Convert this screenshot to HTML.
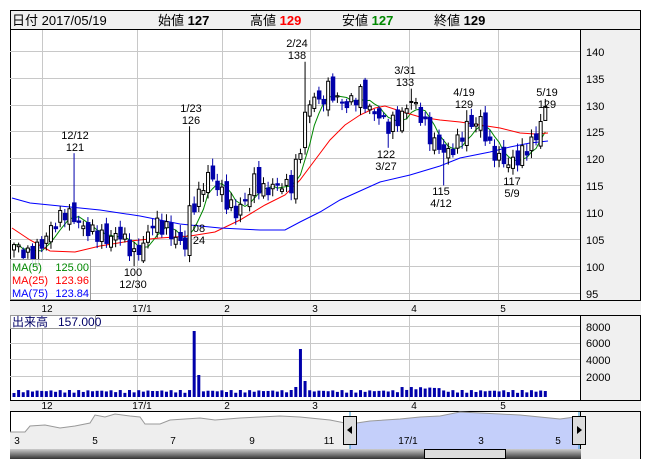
<!DOCTYPE html><html><head><meta charset="utf-8"><style>
body{margin:0;background:#fff;width:652px;height:469px;overflow:hidden;font-family:"Liberation Sans","Noto Sans CJK JP",sans-serif}
svg{position:absolute;left:0;top:0}
</style></head><body>
<svg id="s" width="652" height="469" xmlns="http://www.w3.org/2000/svg" font-family="Liberation Sans, Noto Sans CJK JP, sans-serif">
<rect x="10.5" y="10.5" width="630" height="448" fill="#fff" stroke="#000"/>
<rect x="11" y="11" width="629" height="18" fill="#f0f0f0"/>
<line x1="10" y1="29.5" x2="641" y2="29.5" stroke="#000"/>
<g font-size="13" fill="#000">
<text x="12" y="25">日付 2017/05/19</text>
<text x="158" y="25">始値 <tspan font-weight="bold">127</tspan></text>
<text x="250" y="25">高値 <tspan font-weight="bold" fill="#f00">129</tspan></text>
<text x="342" y="25">安値 <tspan font-weight="bold" fill="#080">127</tspan></text>
<text x="434" y="25">終値 <tspan font-weight="bold">129</tspan></text>
</g>
<rect x="581" y="30" width="59" height="270" fill="#f0f0f0"/>
<line x1="580.5" y1="30" x2="580.5" y2="459" stroke="#000"/>
<g id="grid" stroke="#c8c8c8"></g>
<rect x="10" y="300" width="631" height="15" fill="#f0f0f0"/>
<line x1="10" y1="300.5" x2="641" y2="300.5" stroke="#000"/>
<line x1="10" y1="315.5" x2="641" y2="315.5" stroke="#000"/>
<rect x="581" y="316" width="59" height="84" fill="#f0f0f0"/>
<rect x="10" y="400" width="631" height="11" fill="#f0f0f0"/>
<line x1="10" y1="400.5" x2="641" y2="400.5" stroke="#000"/>
<line x1="10" y1="411.5" x2="641" y2="411.5" stroke="#000"/>
<rect x="581" y="412" width="59" height="47" fill="#f0f0f0"/>
<g font-size="11" fill="#000">
<text x="586" y="56">140</text><text x="586" y="83">135</text><text x="586" y="110">130</text><text x="586" y="136">125</text><text x="586" y="163">120</text><text x="586" y="190">115</text><text x="586" y="217">110</text><text x="586" y="244">105</text><text x="586" y="271">100</text><text x="586" y="298">95</text>
<text x="586" y="331">8000</text><text x="586" y="347">6000</text><text x="586" y="364">4000</text><text x="586" y="381">2000</text>
<g id="axlab"></g>
</g>
<g id="ov"></g>
<g id="ma"></g>
<g id="cand"></g>
<g id="vol"></g>
<g font-size="11" fill="#000" text-anchor="middle">
<text x="75" y="139">12/12</text><text x="75" y="151">121</text>
<text x="191" y="112">1/23</text><text x="191" y="124">126</text>
<text x="297" y="47">2/24</text><text x="297" y="59">138</text>
<text x="405" y="74">3/31</text><text x="405" y="86">133</text>
<text x="464" y="96">4/19</text><text x="464" y="108">129</text>
<text x="547" y="96">5/19</text><text x="547" y="108">129</text>
<text x="386" y="158">122</text><text x="386" y="170">3/27</text>
<text x="441" y="195">115</text><text x="441" y="207">4/12</text>
<text x="512" y="185">117</text><text x="512" y="197">5/9</text>
<text x="133" y="276">100</text><text x="133" y="288">12/30</text>
<text x="199" y="232">08</text><text x="199" y="244">24</text>
</g>
<rect x="10.5" y="259.5" width="80" height="40" fill="#fff" fill-opacity="0.85" stroke="#999"/>
<g font-size="11">
<text x="12" y="271" fill="#080">MA(5)</text><text x="89" y="271" fill="#080" text-anchor="end">125.00</text>
<text x="12" y="284" fill="#f00">MA(25)</text><text x="89" y="284" fill="#f00" text-anchor="end">123.96</text>
<text x="12" y="297" fill="#00f">MA(75)</text><text x="89" y="297" fill="#00f" text-anchor="end">123.84</text>
</g>
<rect x="10.5" y="315.5" width="85" height="13" fill="#fff" stroke="#999"/>
<text x="12" y="326" font-size="12" fill="#006">出来高 <tspan x="58">157.000</tspan></text>
<defs><linearGradient id="sb" x1="0" y1="0" x2="0" y2="1"><stop offset="0" stop-color="#ccc"/><stop offset="1" stop-color="#333"/></linearGradient></defs>
<rect x="10" y="449" width="571" height="10" fill="url(#sb)"/>
<rect x="424.5" y="449.5" width="81" height="9" fill="#ddd" stroke="#000"/>
<rect x="343.5" y="416.5" width="13" height="28" fill="#ddd" stroke="#000"/>
<polygon points="347,430 352,426 352,434" fill="#000"/>
<rect x="572.5" y="416.5" width="13" height="28" fill="#ddd" stroke="#000"/>
<polygon points="582,430 577,426 577,434" fill="#000"/>
</svg>
<script>
const NS="http://www.w3.org/2000/svg";
function el(p,t,a){const e=document.createElementNS(NS,t);for(const k in a)e.setAttribute(k,a[k]);document.getElementById(p).appendChild(e);return e;}
const Y=v=>51+(140-v)*5.378;
[51,78,105,131,158,185,212,239,266,293].forEach(y=>el('grid','line',{x1:10,x2:580,y1:y+.5,y2:y+.5}));
[326,343,359,376].forEach(y=>el('grid','line',{x1:10,x2:580,y1:y+.5,y2:y+.5}));
const vx=[42,137,222,310,409,498];
vx.forEach(x=>{el('grid','line',{x1:x+.5,x2:x+.5,y1:30,y2:300});el('grid','line',{x1:x+.5,x2:x+.5,y1:316,y2:400});});
const lab=['12','17/1','2','3','4','5'];
vx.forEach((x,i)=>{[312,409].forEach(y=>{const t=el('axlab','text',{x:x+5,y:y,'text-anchor':'middle','font-size':'10'});t.textContent=lab[i];});});
let op="M10,449 L10,432 ",ol="";
const ovp=[[10,432],[25,432],[30,426],[45,425],[60,428],[75,426],[90,423],[95,415],[105,417],[115,414],[130,416],[140,417],[145,424],[160,424],[170,420],[200,418],[215,420],[240,418],[260,417],[280,416],[300,417],[330,420],[350,424],[370,421],[400,419],[420,417],[440,416],[460,412],[480,413],[500,414],[520,415],[540,417],[560,419],[575,417],[580,417]];
ovp.forEach(p=>{op+="L"+p[0]+","+p[1]+" ";ol+=p[0]+","+p[1]+" ";});
op+="L580,449 Z";
el('ov','path',{d:op,fill:'#eee'});
const cp=el('ov','clipPath',{id:'c'});const cr=document.createElementNS(NS,'rect');
cr.setAttribute('x',350);cr.setAttribute('y',410);cr.setAttribute('width',230);cr.setAttribute('height',40);cp.appendChild(cr);
el('ov','path',{d:op,fill:'#c4cffa','clip-path':'url(#c)'});
el('ov','polyline',{points:ol,fill:'none',stroke:'#999'});
el('ov','line',{x1:350,x2:350,y1:412,y2:449,stroke:'#39c'});el('ov','line',{x1:579,x2:579,y1:412,y2:449,stroke:'#39c'});
[[17,'3'],[95,'5'],[173,'7'],[252,'9'],[329,'11'],[408,'17/1'],[481,'3'],[558,'5']].forEach(a=>{const t=el('ov','text',{x:a[0],y:444,'font-size':'10','text-anchor':'middle'});t.textContent=a[1];});
const kp=[[0,104],[3,102],[6,104],[8,107],[11,110],[13,109],[15,107],[18,106],[20,105],[23,106],[26,102],[28,104],[30,108],[33,107],[35,105],[37,104],[38,110],[40,113],[42,117],[44,115],[46,112],[48,110],[50,112],[52,116],[54,114],[57,115],[60,115],[62,122],[63,128],[65,132],[66,130],[68,133],[70,131],[72,130],[75,132],[77,129],[79,128],[81,126],[84,128],[86,131],[88,128],[90,124],[92,122],[94,121],[96,123],[98,126],[101,127],[103,122],[105,120],[107,119],[109,120],[111,122],[113,124],[114,127],[115,129]];
const N=116,cl=[];
for(let i=0;i<N;i++){let j=0;while(j<kp.length-1&&kp[j+1][0]<i)j++;const a=kp[j],b=kp[Math.min(j+1,kp.length-1)];const t=b[0]==a[0]?0:(i-a[0])/(b[0]-a[0]);cl.push(a[1]+(b[1]-a[1])*t+Math.sin(i*2.7)*1.4);}
const spikes={13:121,26:100,38:126,63:138,86:133,81:122,93:115,98:129,108:117,115:129};
for(let i=0;i<N;i++){const x=12+i*4.62;const o=i?cl[i-1]+Math.cos(i*1.9)*1.2:cl[0]-1;const c=cl[i];
let h=Math.max(o,c)+0.4+Math.abs(Math.sin(i*3.1))*1.0,l=Math.min(o,c)-0.4-Math.abs(Math.cos(i*2.3))*1.0;
if(spikes[i]!==undefined){if(spikes[i]>c)h=spikes[i];else l=spikes[i];}
const up=c>=o;el('cand','line',{x1:x+2,x2:x+2,y1:Y(h),y2:Y(l),stroke:up?'#000':'#00a'});
const y1=Y(Math.max(o,c)),hh=Math.max(1,Y(Math.min(o,c))-y1);
if(up)el('cand','rect',{x:x+.5,y:y1,width:3,height:hh,fill:'#fff',stroke:'#000'});
else el('cand','rect',{x:x,y:y1-.5,width:4.5,height:hh+1,fill:'#00a'});
let v=4+Math.abs(Math.sin(i*1.7))*3;if(i==39)v=66;if(i==40)v=22;if(i==61)v=10;if(i==60)v=7;if(i==62)v=48;if(i==63)v=16;if(i>=84&&i<=92)v+=3;
el('vol','rect',{x:x+.5,y:397-v,width:3,height:v,fill:'#00a'});}
const ma5=[];for(let i=0;i<N;i++){let s=0,n=0;for(let k=Math.max(0,i-4);k<=i;k++){s+=cl[k];n++;}ma5.push((12+i*4.62+2)+","+Y(s/n));}
el('ma','polyline',{points:ma5.join(' '),fill:'none',stroke:'#080'});
el('ma','polyline',{points:"12,228 30,240 50,251 75,252 100,246 130,241 160,238 190,236 215,232 240,220 265,205 285,195 300,180 315,160 330,140 345,125 360,115 375,108 385,106 400,111 420,117 440,120 460,122 480,125 500,128 520,133 535,134 548,133",fill:'none',stroke:'#f00'});
el('ma','polyline',{points:"12,198 30,203 60,206 100,210 140,216 180,224 220,228 260,230 285,230 300,222 320,212 340,200 360,191 380,182 410,175 440,166 460,158 490,152 510,147 530,143 548,141",fill:'none',stroke:'#00f'});
</script>
</body></html>
